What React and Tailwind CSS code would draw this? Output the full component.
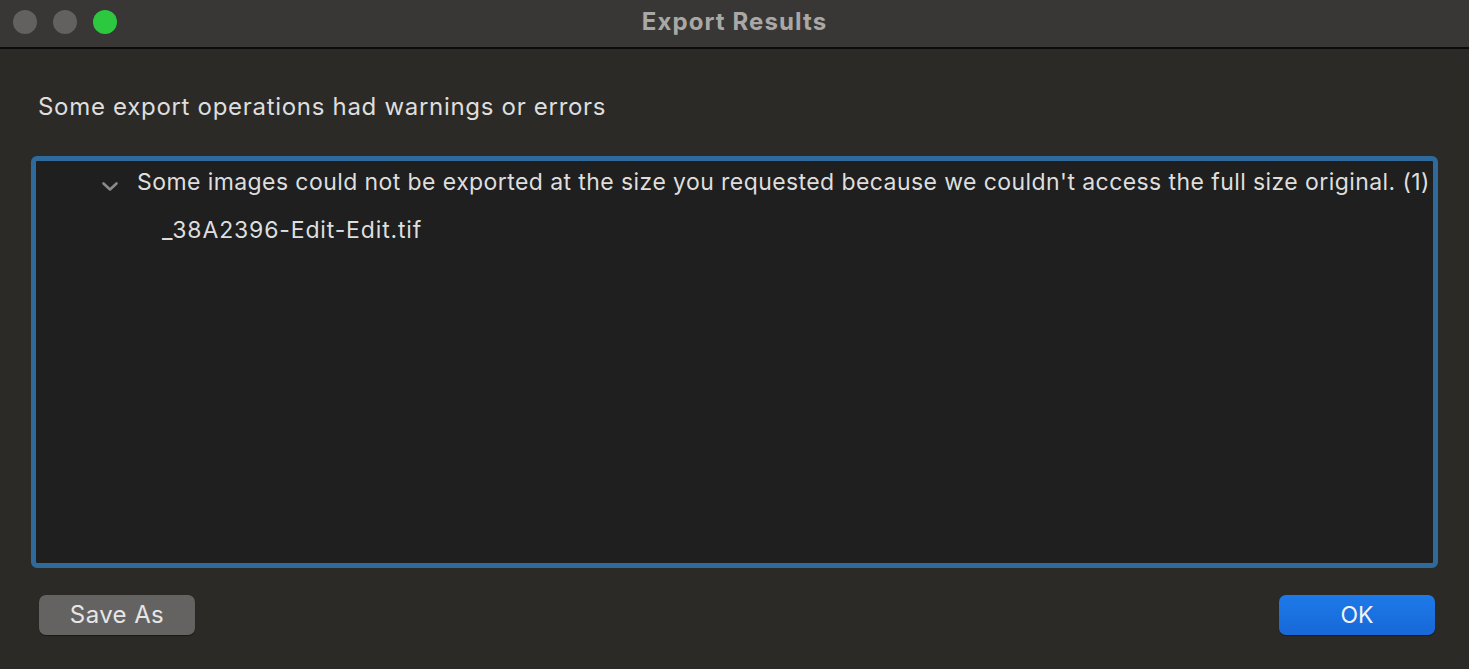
export default function App() {
  return (
    <div className="flex h-[669px] w-[1469px] flex-col overflow-hidden bg-[#2c2a27] font-['Inter','Noto_Sans',sans-serif] text-[#dedede]">
      {/* Title bar */}
      <div className="relative flex h-[49px] shrink-0 items-center border-b-2 border-[#0c0c0c] bg-[#393735] pb-[4px]">
        <div className="flex items-center gap-[16px] pl-[13px]">
          <span className="h-[24px] w-[24px] rounded-full bg-[#626160]" />
          <span className="h-[24px] w-[24px] rounded-full bg-[#626160]" />
          <span className="h-[24px] w-[24px] rounded-full bg-[#2bc840]" />
        </div>
        <div className="absolute inset-x-0 top-[4px] text-center text-[24px] font-bold tracking-[1.1px] text-[#a9a8a6]">
          Export Results
        </div>
      </div>

      {/* Body */}
      <div className="flex flex-1 flex-col px-[31px]">
        <p className="mt-[44px] pl-[7px] text-[24px] leading-[28px] tracking-[0.7px]">
          Some export operations had warnings or errors
        </p>

        <div className="mt-[35px] h-[412px] rounded-[6px] border-[5px] border-[#2e6b9c] bg-[#1f1f1f]">
          <div className="flex items-center pt-[7px]">
            <svg
              viewBox="0 0 18 11"
              className="ml-[65px] mt-[9px] h-[11px] w-[18px] text-[#8a8a8a]"
              fill="none"
              stroke="currentColor"
              strokeWidth={2.6}
              strokeLinecap="round"
              strokeLinejoin="round"
            >
              <path d="M2.5 2.5 L9 8.5 L15.5 2.5" />
            </svg>
            <span className="ml-[18px] text-[23px] leading-[28px] tracking-[0.42px]">
              Some images could not be exported at the size you requested because we couldn't access the full size original. (1)
            </span>
          </div>
          <div className="mt-[20px] pl-[126px] text-[23px] leading-[28px] tracking-[0.85px]">
            _38A2396-Edit-Edit.tif
          </div>
        </div>

        <div className="mt-[27px] flex items-center justify-between pl-[8px] pr-[3px]">
          <button className="h-[40px] w-[156px] rounded-[7px] bg-[#646362] text-[24px] tracking-[0.4px] text-[#e6e6e6] shadow-[0_1px_1px_rgba(0,0,0,0.4)]">
            Save As
          </button>
          <button className="h-[40px] w-[156px] rounded-[7px] bg-gradient-to-b from-[#1d7ae8] to-[#1868d8] text-[23px] text-[#f0f4fa] shadow-[0_1px_1px_rgba(0,0,0,0.4)]">
            OK
          </button>
        </div>
      </div>
    </div>
  );
}
